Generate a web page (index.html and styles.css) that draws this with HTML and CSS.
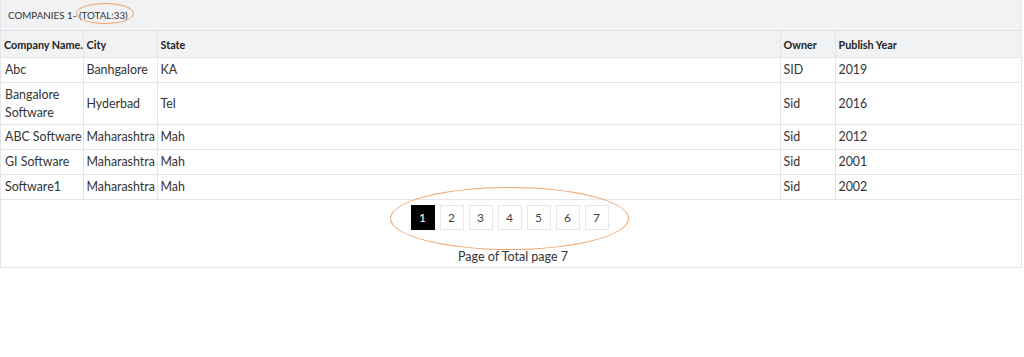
FILE: index.html
```html
<!DOCTYPE html>
<html>
<head>
<meta charset="utf-8">
<link rel="stylesheet" href="styles.css">
</head>
<body>
<div class="card">
  <div class="card-header">
    <span class="title">COMPANIES 1- <span class="total">(TOTAL:33)<span class="ring ring-total"></span></span></span>
  </div>
  <table class="grid">
    <colgroup>
      <col class="c1"><col class="c2"><col class="c3"><col class="c4"><col>
    </colgroup>
    <thead>
      <tr><th>Company Name.</th><th>City</th><th>State</th><th>Owner</th><th>Publish Year</th></tr>
    </thead>
    <tbody>
      <tr><td>Abc</td><td>Banhgalore</td><td>KA</td><td>SID</td><td>2019</td></tr>
      <tr class="tall"><td>Bangalore<br>Software</td><td>Hyderbad</td><td>Tel</td><td>Sid</td><td>2016</td></tr>
      <tr><td>ABC Software</td><td>Maharashtra</td><td>Mah</td><td>Sid</td><td>2012</td></tr>
      <tr><td>GI Software</td><td>Maharashtra</td><td>Mah</td><td>Sid</td><td>2001</td></tr>
      <tr><td>Software1</td><td>Maharashtra</td><td>Mah</td><td>Sid</td><td>2002</td></tr>
    </tbody>
  </table>
  <div class="pager-area">
    <div class="pager">
      <span class="ring ring-pager"></span>
      <span class="pg active">1</span>
      <span class="pg">2</span>
      <span class="pg">3</span>
      <span class="pg">4</span>
      <span class="pg">5</span>
      <span class="pg">6</span>
      <span class="pg">7</span>
    </div>
    <div class="page-info">Page of Total page 7</div>
  </div>
</div>
</body>
</html>
```
FILE: styles.css
```css
html, body { margin: 0; padding: 0; background: #fff; }
body { font-family: Lato, "Open Sans", sans-serif; color: #333; }

.card {
  width: 1022px;
  border: 1px solid #e3e5e8;
  border-top: none;
  box-sizing: border-box;
}

.card-header {
  height: 31px;
  background: #f1f2f4;
  border-bottom: 1px solid #dcdfe3;
  box-sizing: border-box;
  display: flex;
  align-items: center;
  padding-left: 7px;
  font-size: 9.8px;
  color: #333;
}
.total { position: relative; }
.ring {
  position: absolute;
  border: 1px solid #f0a46a;
  border-radius: 50%;
  pointer-events: none;
}
.ring-total { left: -3px; top: -6px; width: 56px; height: 19px; }

.grid {
  width: 100%;
  border-collapse: collapse;
  table-layout: fixed;
}
.c1 { width: 82px; }
.c2 { width: 74px; }
.c3 { width: 623px; }
.c4 { width: 55px; }

.grid th {
  background: #f1f2f4;
  font-size: 10.8px;
  font-weight: 700;
  color: #222;
  text-align: left;
  height: 25px;
  padding: 1px 3px 0 3px;
  border-left: 1px solid #e3e5e8;
  border-bottom: 1px solid #e3e5e8;
  white-space: nowrap;
}
.grid td {
  font-size: 12.4px;
  color: #333;
  height: 24px;
  padding: 0 3px 0 4px;
  border-left: 1px solid #e3e5e8;
  border-bottom: 1px solid #e3e5e8;
  white-space: nowrap;
  line-height: 18px;
}
.grid td:nth-child(n+2) { padding-left: 3px; }
.grid tr > :first-child { border-left: none; }
.grid tr.tall td { height: 41px; }

.pager-area {
  height: 67px;
  display: flex;
  flex-direction: column;
  align-items: center;
}
.pager {
  position: relative;
  display: flex;
  gap: 5px;
  margin-top: 5px;
  margin-left: -3px;
}
.ring-pager { left: -21px; top: -18px; width: 237px; height: 61px; }
.pg {
  width: 24px;
  height: 25px;
  box-sizing: border-box;
  border: 1px solid #e6e7e9;
  display: flex;
  align-items: center;
  justify-content: center;
  font-size: 12px;
  color: #444;
  background: #fff;
}
.pg.active { background: #000; color: #fff; border-color: #000; }
.page-info {
  margin-top: 19px;
  font-size: 12.5px;
  color: #333;
  margin-left: 4px;
}
```
